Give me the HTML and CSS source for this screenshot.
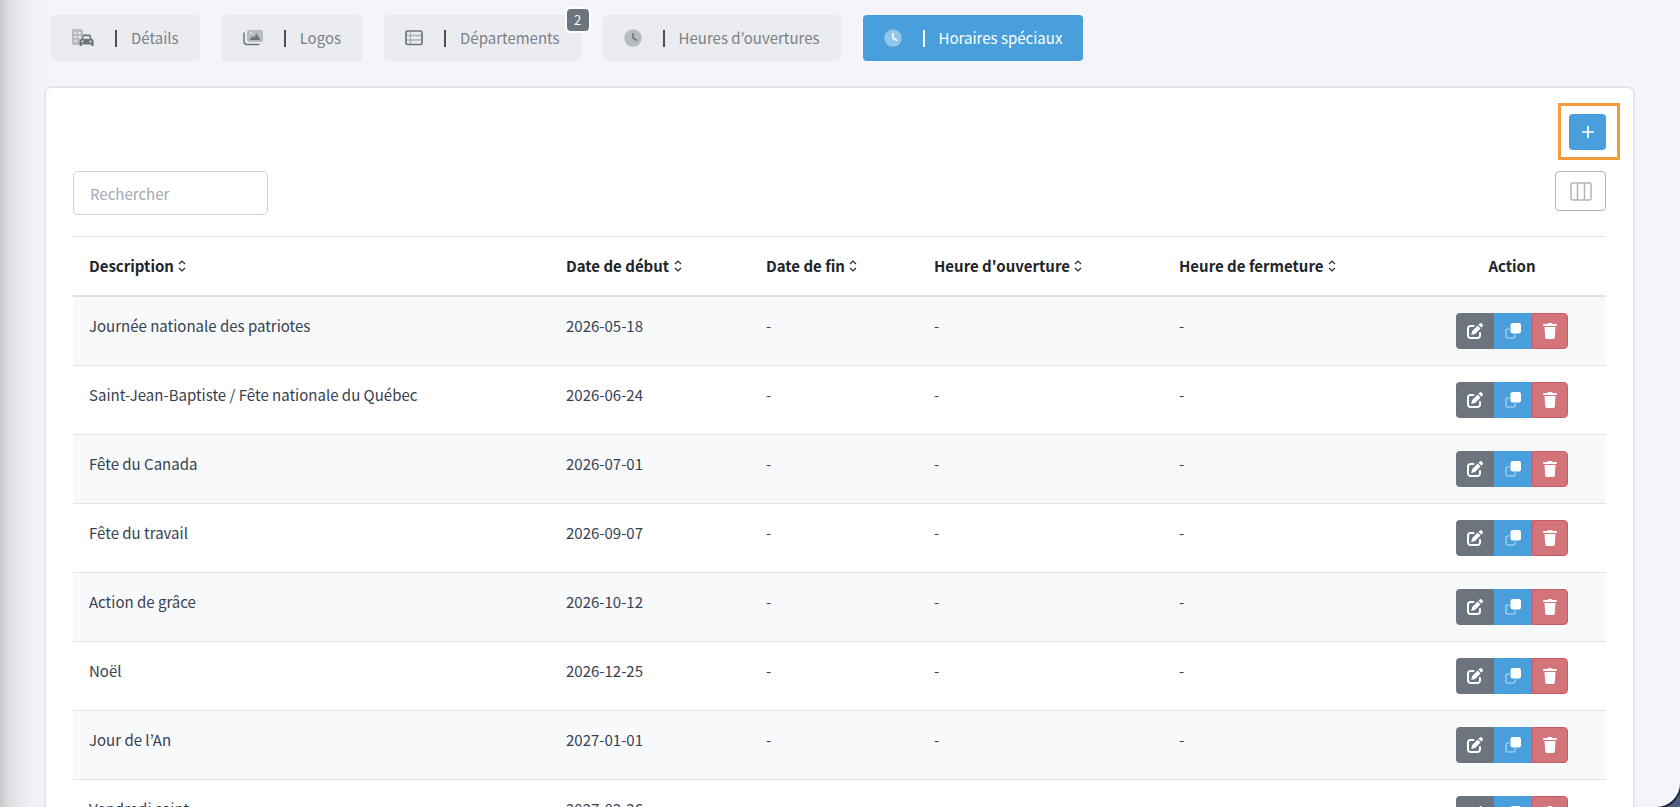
FILE: index.html
```html
<!DOCTYPE html>
<html lang="fr">
<head>
  <meta charset="UTF-8" />
  <meta name="viewport" content="width=device-width, initial-scale=1" />
  <title>Horaires spéciaux</title>
  <link rel="stylesheet" href="styles.css">
</head>
<body>
  <!-- Icons -->
  <svg class="sprite" aria-hidden="true">
    <symbol id="i-sort" viewBox="0 0 8 12">
      <path d="M1 4l3-3 3 3M1 8l3 3 3-3" fill="none" stroke="currentColor" stroke-width="1.1"/>
    </symbol>
    <symbol id="i-clock" viewBox="0 0 18 18">
      <circle cx="9" cy="9" r="8.7" fill="currentColor" opacity=".4"/>
      <path d="M9 4.6V9l3.4 2.2" fill="none" stroke="currentColor" stroke-width="1.6" stroke-linecap="round" stroke-linejoin="round"/>
    </symbol>
    <symbol id="i-edit" viewBox="0 0 16 16">
      <path d="M6.500 3H3.400A2.400 2.400 0 0 0 1 5.400v7.200A2.400 2.400 0 0 0 3.400 15h7.200a2.400 2.400 0 0 0 2.400-2.400V10" fill="none" stroke="currentColor" stroke-width="2" stroke-linecap="round"/>
      <path d="M5.200 8.100L10.700 2.600l2.800 2.800L8 10.900l-3.800 1.100zM11.500 1.800l1.200-1.200a1.400 1.400 0 0 1 2 0l.8.8a1.400 1.400 0 0 1 0 2L14.300 4.600z" fill="currentColor"/>
    </symbol>
    <symbol id="i-copy" viewBox="0 0 16 16">
      <path d="M4.500 6H3a2 2 0 0 0-2 2v5a2 2 0 0 0 2 2h5a2 2 0 0 0 2-2v-1.500" fill="none" stroke="currentColor" stroke-width="1.600" opacity=".45"/>
      <rect x="5.500" y="0" width="10.500" height="10.500" rx="2.200" fill="currentColor"/>
    </symbol>
    <symbol id="i-trash" viewBox="0 0 14 16">
      <path d="M4.600.6A1 1 0 0 1 5.500 0h3a1 1 0 0 1 .9.600l.2.400H13a1 1 0 0 1 0 2H1a1 1 0 0 1 0-2h3.400zM1.500 4h11l-.7 10.600A1.500 1.500 0 0 1 10.300 16H3.700a1.500 1.500 0 0 1-1.500-1.400z" fill="currentColor"/>
    </symbol>
  </svg>

  <div class="page">
    <nav class="tabs">
      <a class="tab" href="#details">
        <svg class="tab-icon" width="22" height="18" viewBox="0 0 22 18">
          <path fill="currentColor" opacity=".4" fill-rule="evenodd" d="M2 0h7a2 2 0 0 1 2 2v3L8 10v6H2a2 2 0 0 1-2-2V2a2 2 0 0 1 2-2zM2.500 3v2h2V3zM6.500 3v2h2V3zM2.500 7v2h2V7zM6.500 7v2h2V7zM2.500 11v2h2v-2z"/>
          <path fill="currentColor" fill-rule="evenodd" d="M10.800 5.500h7.400l1.500 4.200a2.600 2.600 0 0 1 1.900 2.500V17h-2.200v-1.500H9.800V17H7.600v-4.800a2.600 2.600 0 0 1 1.800-2.500zM11.900 7.300L11 9.800h7l-.9-2.500zM10.500 11.600a1 1 0 1 0 0 2 1 1 0 0 0 0-2zM18.500 11.600a1 1 0 1 0 0 2 1 1 0 0 0 0-2z"/>
        </svg>
        <span class="bar"></span>Détails
      </a>
      <a class="tab" href="#logos">
        <svg class="tab-icon" width="20" height="18" viewBox="0 0 20 18">
          <path fill="none" stroke="currentColor" stroke-width="1.500" stroke-linecap="round" d="M1 4v8.500a3 3 0 0 0 3 3h12"/>
          <rect x="4" y="1" width="16" height="12" rx="2" fill="currentColor" opacity=".4"/>
          <circle cx="8" cy="4" r="1" fill="#ebecef"/>
          <path fill="currentColor" d="M6.500 11l3-4 1.500 1.700L13.500 4.500l4 6.500z"/>
        </svg>
        <span class="bar"></span>Logos
      </a>
      <a class="tab" href="#departements">
        <svg class="tab-icon" width="18" height="18" viewBox="0 0 18 18">
          <rect x="1" y="2" width="16" height="13.500" rx="1.500" fill="none" stroke="currentColor" stroke-width="1.700"/>
          <path d="M2 6.500h14M2 11h14M5.500 3v12" fill="none" stroke="currentColor" stroke-width="1.300" opacity=".5"/>
        </svg>
        <span class="bar"></span>Départements
        <span class="badge">2</span>
      </a>
      <a class="tab" href="#heures">
        <svg class="tab-icon" width="18" height="18"><use href="#i-clock"/></svg>
        <span class="bar"></span>Heures d’ouvertures
      </a>
      <a class="tab active" href="#horaires">
        <svg class="tab-icon" width="18" height="18"><use href="#i-clock"/></svg>
        <span class="bar"></span>Horaires spéciaux
      </a>
    </nav>

    <main class="card">
      <div class="card-top">
        <div class="highlight">
          <button class="btn-add" type="button" aria-label="Ajouter">
            <svg width="12" height="12" viewBox="0 0 12 12"><path d="M6 0v12M0 6h12" stroke="currentColor" stroke-width="1.700"/></svg>
          </button>
        </div>
      </div>

      <div class="toolbar">
        <input class="search" type="search" placeholder="Rechercher" aria-label="Rechercher">
        <button class="btn-columns" type="button" aria-label="Colonnes">
          <svg width="22" height="19" viewBox="0 0 22 19"><path d="M2.500 1h17A1.500 1.500 0 0 1 21 2.500v14a1.500 1.500 0 0 1-1.500 1.500h-17A1.500 1.500 0 0 1 1 16.500v-14A1.500 1.500 0 0 1 2.500 1zM7.500 1v17M14.500 1v17" fill="none" stroke="currentColor" stroke-width="1.500"/></svg>
        </button>
      </div>

      <table class="table">
        <colgroup>
          <col>
          <col class="col-start">
          <col class="col-end">
          <col class="col-open">
          <col class="col-close">
          <col class="col-action">
        </colgroup>
        <thead>
          <tr>
            <th>Description <svg class="sort"><use href="#i-sort"/></svg></th>
            <th>Date de début <svg class="sort"><use href="#i-sort"/></svg></th>
            <th>Date de fin <svg class="sort"><use href="#i-sort"/></svg></th>
            <th>Heure d'ouverture <svg class="sort"><use href="#i-sort"/></svg></th>
            <th>Heure de fermeture <svg class="sort"><use href="#i-sort"/></svg></th>
            <th class="center">Action</th>
          </tr>
        </thead>
        <tbody id="rows"></tbody>
      </table>
    </main>
  </div>

  <script src="script.js"></script>
</body>
</html>
```
FILE: styles.css
```css
* {
  box-sizing: border-box;
}

body {
  margin: 0;
  height: 100vh;
  overflow: hidden;
  background: #4a5f7d;
  color: #374151;
  font-family: "Noto Sans CJK KR", "Noto Sans", sans-serif;
  font-size: 15px;
  line-height: 24px;
}

.sprite {
  display: none;
}

.page {
  height: 100vh;
  overflow: hidden;
  padding: 15px 47px 0 46px;
  background: linear-gradient(to right, #c6c7c9 0, #dcdde0 8px, #e9eaee 20px, #f1f2f7 36px, #f4f5fa 50px);
  border-bottom-right-radius: 24px;
  box-shadow: 0 0 0 2px #20262e;
}

/* Tabs */
.tabs {
  display: flex;
  gap: 22px;
  padding-left: 5px;
}

.tab {
  position: relative;
  display: flex;
  align-items: center;
  height: 46px;
  padding: 0 21px;
  border-radius: 4px;
  background: #ebecef;
  color: #7a8188;
  text-decoration: none;
  white-space: nowrap;
}

.tab-icon {
  color: #6c757d;
}

.bar {
  width: 2px;
  height: 17px;
  margin: 0 14px 0 21px;
  background: #4b5056;
}

.tab.active {
  background: #489fdc;
  color: #fff;
}

.tab.active .tab-icon {
  color: #fff;
}

.tab.active .bar {
  background: #fff;
}

.badge {
  position: absolute;
  top: -8px;
  right: -10px;
  width: 26px;
  height: 26px;
  border: 2px solid #fff;
  border-radius: 6px;
  background: #6c757d;
  color: #fff;
  font-size: 13px;
  line-height: 22px;
  text-align: center;
}

/* Card */
.card {
  margin-top: 27px;
  padding: 15px 27px 0;
  background: #fff;
  border-radius: 5px;
  box-shadow: 0 0 3px rgba(0, 0, 0, 0.25);
}

.card-top {
  display: flex;
  justify-content: flex-end;
  margin-right: -14px;
}

.highlight {
  padding: 8px 11px 7px 8px;
  border: 3px solid #f29b38;
}

.btn-add {
  display: flex;
  align-items: center;
  justify-content: center;
  width: 37px;
  height: 36px;
  padding: 0;
  border: 0;
  border-radius: 4px;
  background: #489fdc;
  color: #fff;
}

.toolbar {
  display: flex;
  align-items: flex-start;
  justify-content: space-between;
  margin: 11px 0 21px;
}

.search {
  width: 195px;
  height: 44px;
  padding: 0 16px;
  border: 1px solid #ced4da;
  border-radius: 5px;
  font: inherit;
}

.search::placeholder {
  color: #a5a9b1;
}

.btn-columns {
  display: flex;
  align-items: center;
  justify-content: center;
  width: 51px;
  height: 40px;
  padding: 0;
  border: 1px solid #adb5bd;
  border-radius: 4px;
  background: #fff;
  color: #adb5bd;
}

/* Table */
.table {
  width: 100%;
  border-spacing: 0;
  table-layout: fixed;
}

.col-start {
  width: 200px;
}

.col-end {
  width: 168px;
}

.col-open {
  width: 245px;
}

.col-close {
  width: 255px;
}

.col-action {
  width: 188px;
}

.table th {
  padding: 17px 16px;
  border-top: 1px solid #dee2e6;
  border-bottom: 2px solid #dee2e6;
  color: #212529;
  text-align: left;
  white-space: nowrap;
}

.table td {
  height: 69px;
  padding: 17px 16px 0;
  border-bottom: 1px solid #e2e4e9;
  vertical-align: top;
}

.table th.center {
  text-align: center;
}

.table td.center {
  padding-top: 16px;
  text-align: center;
}

.table tbody tr:nth-child(odd) {
  background: #f8f9fb;
}

.sort {
  width: 8px;
  height: 12px;
  margin-left: 1px;
}

.btn-group {
  display: inline-flex;
  border-radius: 4px;
  overflow: hidden;
}

.btn-group button {
  display: flex;
  align-items: center;
  justify-content: center;
  width: 38px;
  height: 36px;
  padding: 0;
  border: 0;
  color: #fff;
}

.btn-group .edit {
  background: #6c757d;
}

.btn-group .copy {
  background: #489fdc;
}

.btn-group .delete {
  width: 36px;
  border: 1px solid #cb5964;
  border-radius: 0 4px 4px 0;
  background: #d3747b;
}
```
FILE: script.js
```js
const holidays = [
  ["Journée nationale des patriotes", "2026-05-18"],
  ["Saint-Jean-Baptiste / Fête nationale du Québec", "2026-06-24"],
  ["Fête du Canada", "2026-07-01"],
  ["Fête du travail", "2026-09-07"],
  ["Action de grâce", "2026-10-12"],
  ["Noël", "2026-12-25"],
  ["Jour de l’An", "2027-01-01"],
  ["Vendredi saint", "2027-03-26"]
];

document.getElementById("rows").innerHTML = holidays.map(([name, start]) => `
  <tr>
    <td>${name}</td>
    <td>${start}</td>
    <td>-</td>
    <td>-</td>
    <td>-</td>
    <td class="center">
      <div class="btn-group">
        <button type="button" class="edit" aria-label="Modifier"><svg width="16" height="16"><use href="#i-edit"/></svg></button>
        <button type="button" class="copy" aria-label="Dupliquer"><svg width="16" height="16"><use href="#i-copy"/></svg></button>
        <button type="button" class="delete" aria-label="Supprimer"><svg width="14" height="16"><use href="#i-trash"/></svg></button>
      </div>
    </td>
  </tr>`).join("");
```
